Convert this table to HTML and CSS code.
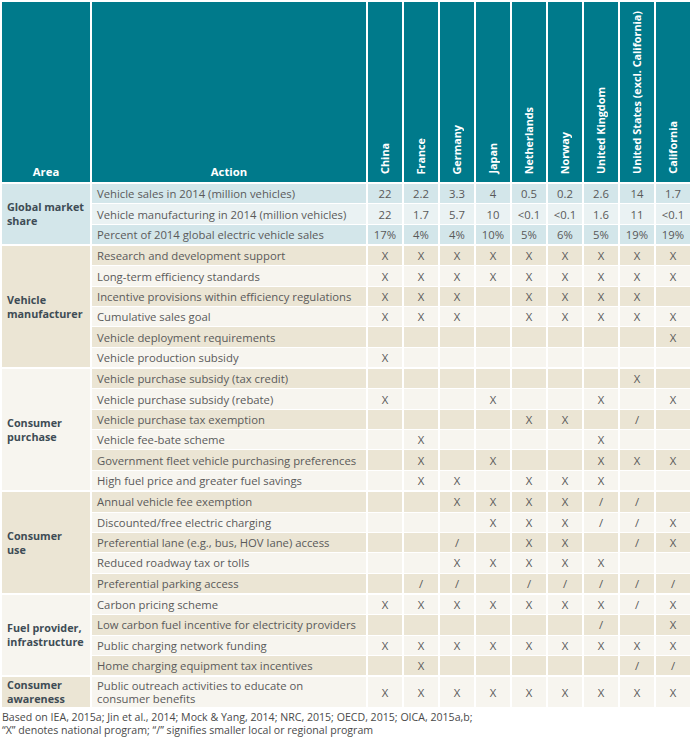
FILE: index.html
```html
<!DOCTYPE html>
<html>
<head>
<meta charset="utf-8">
<link rel="stylesheet" href="styles.css">
</head>
<body>
<table class="policy">
<colgroup>
<col class="c-area"><col class="c-action">
<col class="c-num"><col class="c-num"><col class="c-num"><col class="c-num"><col class="c-num"><col class="c-num"><col class="c-num"><col class="c-num"><col class="c-num">
</colgroup>
<thead>
<tr class="head">
<th class="h-area">Area</th>
<th class="h-action">Action</th>
<th class="h-country"><span class="vert">China</span></th>
<th class="h-country"><span class="vert">France</span></th>
<th class="h-country"><span class="vert">Germany</span></th>
<th class="h-country"><span class="vert">Japan</span></th>
<th class="h-country"><span class="vert">Netherlands</span></th>
<th class="h-country"><span class="vert">Norway</span></th>
<th class="h-country"><span class="vert">United Kingdom</span></th>
<th class="h-country"><span class="vert">United States (excl. California)</span></th>
<th class="h-country"><span class="vert">California</span></th>
</tr>
</thead>
<tbody class="blue">
<tr class="first dark"><td class="area" rowspan="3">Global market<br>share</td><td class="act">Vehicle sales in 2014 (million vehicles)</td><td>22</td><td>2.2</td><td>3.3</td><td>4</td><td>0.5</td><td>0.2</td><td>2.6</td><td>14</td><td>1.7</td></tr>
<tr class="light"><td class="act">Vehicle manufacturing in 2014 (million vehicles)</td><td>22</td><td>1.7</td><td>5.7</td><td>10</td><td>&lt;0.1</td><td>&lt;0.1</td><td>1.6</td><td>11</td><td>&lt;0.1</td></tr>
<tr class="dark"><td class="act">Percent of 2014 global electric vehicle sales</td><td>17%</td><td>4%</td><td>4%</td><td>10%</td><td>5%</td><td>6%</td><td>5%</td><td>19%</td><td>19%</td></tr>
</tbody>
<tbody class="tan">
<tr class="first dark"><td class="area area-dark" rowspan="6">Vehicle<br>manufacturer</td><td class="act">Research and development support</td><td>X</td><td>X</td><td>X</td><td>X</td><td>X</td><td>X</td><td>X</td><td>X</td><td>X</td></tr>
<tr class="light"><td class="act">Long-term efficiency standards</td><td>X</td><td>X</td><td>X</td><td>X</td><td>X</td><td>X</td><td>X</td><td>X</td><td>X</td></tr>
<tr class="dark"><td class="act">Incentive provisions within efficiency regulations</td><td>X</td><td>X</td><td>X</td><td></td><td>X</td><td>X</td><td>X</td><td>X</td><td></td></tr>
<tr class="light"><td class="act">Cumulative sales goal</td><td>X</td><td>X</td><td>X</td><td></td><td>X</td><td>X</td><td>X</td><td>X</td><td>X</td></tr>
<tr class="dark"><td class="act">Vehicle deployment requirements</td><td></td><td></td><td></td><td></td><td></td><td></td><td></td><td></td><td>X</td></tr>
<tr class="light"><td class="act">Vehicle production subsidy</td><td>X</td><td></td><td></td><td></td><td></td><td></td><td></td><td></td><td></td></tr>
</tbody>
<tbody class="tan">
<tr class="first dark"><td class="area area-light" rowspan="6">Consumer<br>purchase</td><td class="act">Vehicle purchase subsidy (tax credit)</td><td></td><td></td><td></td><td></td><td></td><td></td><td></td><td>X</td><td></td></tr>
<tr class="light"><td class="act">Vehicle purchase subsidy (rebate)</td><td>X</td><td></td><td></td><td>X</td><td></td><td></td><td>X</td><td></td><td>X</td></tr>
<tr class="dark"><td class="act">Vehicle purchase tax exemption</td><td></td><td></td><td></td><td></td><td>X</td><td>X</td><td></td><td>/</td><td></td></tr>
<tr class="light"><td class="act">Vehicle fee-bate scheme</td><td></td><td>X</td><td></td><td></td><td></td><td></td><td>X</td><td></td><td></td></tr>
<tr class="dark"><td class="act">Government fleet vehicle purchasing preferences</td><td></td><td>X</td><td></td><td>X</td><td></td><td></td><td>X</td><td>X</td><td>X</td></tr>
<tr class="light"><td class="act">High fuel price and greater fuel savings</td><td></td><td>X</td><td>X</td><td></td><td>X</td><td>X</td><td>X</td><td></td><td></td></tr>
</tbody>
<tbody class="tan">
<tr class="first dark"><td class="area area-dark" rowspan="5">Consumer<br>use</td><td class="act">Annual vehicle fee exemption</td><td></td><td></td><td>X</td><td>X</td><td>X</td><td>X</td><td>/</td><td>/</td><td></td></tr>
<tr class="light"><td class="act">Discounted/free electric charging</td><td></td><td></td><td></td><td>X</td><td>X</td><td>X</td><td>/</td><td>/</td><td>X</td></tr>
<tr class="dark"><td class="act">Preferential lane (e.g., bus, HOV lane) access</td><td></td><td></td><td>/</td><td></td><td>X</td><td>X</td><td></td><td>/</td><td>X</td></tr>
<tr class="light"><td class="act">Reduced roadway tax or tolls</td><td></td><td></td><td>X</td><td>X</td><td>X</td><td>X</td><td>X</td><td></td><td></td></tr>
<tr class="dark"><td class="act">Preferential parking access</td><td></td><td>/</td><td>/</td><td></td><td>/</td><td>/</td><td>/</td><td>/</td><td>/</td></tr>
</tbody>
<tbody class="tan">
<tr class="first light"><td class="area area-light" rowspan="4">Fuel provider,<br>infrastructure</td><td class="act">Carbon pricing scheme</td><td>X</td><td>X</td><td>X</td><td>X</td><td>X</td><td>X</td><td>X</td><td>/</td><td>X</td></tr>
<tr class="dark"><td class="act">Low carbon fuel incentive for electricity providers</td><td></td><td></td><td></td><td></td><td></td><td></td><td>/</td><td></td><td>X</td></tr>
<tr class="light"><td class="act">Public charging network funding</td><td>X</td><td>X</td><td>X</td><td>X</td><td>X</td><td>X</td><td>X</td><td>X</td><td>X</td></tr>
<tr class="dark"><td class="act">Home charging equipment tax incentives</td><td></td><td>X</td><td></td><td></td><td></td><td></td><td></td><td>/</td><td>/</td></tr>
</tbody>
<tbody class="tan">
<tr class="first light tall"><td class="area area-dark">Consumer<br>awareness</td><td class="act">Public outreach activities to educate on<br>consumer benefits</td><td>X</td><td>X</td><td>X</td><td>X</td><td>X</td><td>X</td><td>X</td><td>X</td><td>X</td></tr>
</tbody>
</table>
<p class="note">Based on IEA, 2015a; Jin et al., 2014; Mock &amp; Yang, 2014; NRC, 2015; OECD, 2015; OICA, 2015a,b;<br>“X” denotes national program; “/” signifies smaller local or regional program</p>
</body>
</html>
```
FILE: styles.css
```css
html, body {
  margin: 0;
  background: #ffffff;
}
body {
  padding-top: 2px;
  font-family: "Open Sans", "Liberation Sans", sans-serif;
  font-size: 11.3px;
  color: #595959;
}
.policy {
  table-layout: fixed;
  width: 692px;
  border-collapse: separate;
  border-spacing: 2px 0;
}
.c-area { width: 88px; }
.c-action { width: 274px; }
.c-num { width: 34px; }

.head th {
  background: #007a8b;
  color: #ffffff;
  font-weight: 700;
  height: 180px;
  box-sizing: border-box;
  padding: 0 0 5px 0;
  vertical-align: bottom;
  font-size: 10.8px;
}
.vert {
  writing-mode: vertical-rl;
  transform: rotate(180deg);
  display: inline-block;
  line-height: 12px;
  white-space: nowrap;
}
.head th.h-area, .head th.h-action {
  padding-bottom: 3px;
  line-height: 14px;
  font-size: 11.3px;
}
td {
  height: 20.35px;
  padding: 0;
  text-align: center;
  vertical-align: middle;
  border-top: 1px solid #ffffff;
  line-height: 13px;
  box-sizing: border-box;
}
tr.first td {
  border-top: 2px solid #ffffff;
  height: 21.35px;
}
td.act {
  text-align: left;
  padding-left: 5px;
  color: #5a5a5a;
}
td.area {
  text-align: left;
  padding: 0 2px 0 5px;
  font-weight: 700;
  font-size: 10.8px;
  color: #3e4c55;
  line-height: 14px;
}
.blue .dark td, .blue td.area { background: #d3e6ea; }
.blue .light td { background: #eaf2f3; }
.tan .dark td { background: #ebe5d4; }
.tan .light td { background: #f7f5ef; }
.tan td.area-dark { background: #ebe5d4; }
.tan td.area-light { background: #f7f5ef; }
tr.tall td {
  height: 32px;
}
.note {
  margin: 4px 0 0 2px;
  font-size: 10.6px;
  line-height: 13px;
  color: #4a4a4a;
}
```
